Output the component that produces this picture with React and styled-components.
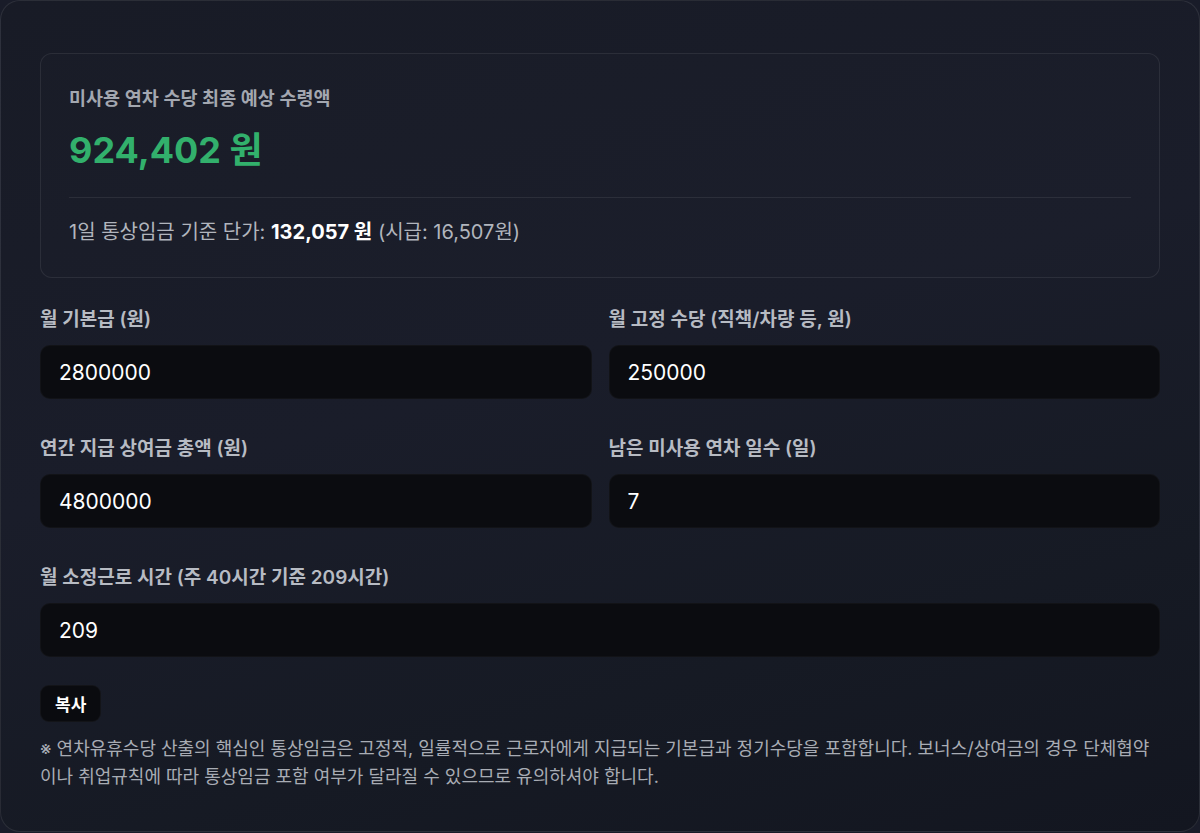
import styled, { createGlobalStyle } from "styled-components";

const GlobalStyle = createGlobalStyle`
  html, body {
    margin: 0;
    padding: 0;
    background: #191c29;
  }
  body {
    font-family: "Inter", "Noto Sans CJK KR", sans-serif;
  }
  * { box-sizing: border-box; }
`;

const Card = styled.div`
  width: 1200px;
  height: 832px;
  padding: 52px 39px 38px;
  border: 1px solid rgba(255, 255, 255, 0.09);
  border-radius: 20px;
  background: linear-gradient(165deg, #181b26 0%, #1a1d2a 45%, #161a24 75%, #131620 100%);
  display: flex;
  flex-direction: column;
`;

const ResultBox = styled.div`
  border: 1px solid rgba(255, 255, 255, 0.08);
  border-radius: 12px;
  padding: 32px 28px;
  background: rgba(255, 255, 255, 0.006);
`;

const ResultLabel = styled.div`
  font-size: 18.5px;
  line-height: 24px;
  font-weight: 600;
  color: #a3a7b0;
`;

const Amount = styled.div`
  margin-top: 18px;
  font-size: 36px;
  line-height: 44px;
  font-weight: 700;
  color: #32b06c;
`;

const Divider = styled.div`
  margin-top: 25px;
  height: 1px;
  background: rgba(255, 255, 255, 0.08);
`;

const Detail = styled.div`
  margin-top: 21px;
  font-size: 20px;
  line-height: 26px;
  color: #b1b5bd;

  strong {
    color: #ffffff;
    font-weight: 700;
  }
`;

const FieldGrid = styled.div`
  margin-top: 30px;
  display: grid;
  grid-template-columns: 1fr 1fr;
  column-gap: 17px;
  row-gap: 38px;
`;

const Field = styled.label`
  display: flex;
  flex-direction: column;
  gap: 13px;
  grid-column: ${(p) => (p.$wide ? "1 / -1" : "auto")};
`;

const FieldLabel = styled.span`
  font-size: 19px;
  line-height: 24px;
  font-weight: 600;
  color: #b7bbc3;
`;

const Input = styled.input`
  height: 54px;
  width: 100%;
  padding: 0 18px;
  border: 1px solid rgba(255, 255, 255, 0.03);
  border-radius: 10px;
  background: #0b0c10;
  color: #ffffff;
  font-family: "Inter", "Noto Sans CJK KR", sans-serif;
  font-size: 21px;
  outline: none;
`;

const CopyButton = styled.button`
  align-self: flex-start;
  margin-top: 28px;
  height: 37px;
  padding: 0 14px;
  border: 1px solid rgba(255, 255, 255, 0.04);
  border-radius: 9px;
  background: #0a0b0f;
  color: #ffffff;
  font-family: "Inter", "Noto Sans CJK KR", sans-serif;
  font-size: 17px;
  font-weight: 700;
`;

const Note = styled.p`
  margin: 13px 0 0;
  font-size: 18px;
  line-height: 28px;
  color: #a8acb4;
`;

const fields = [
  { label: "월 기본급 (원)", value: "2800000" },
  { label: "월 고정 수당 (직책/차량 등, 원)", value: "250000" },
  { label: "연간 지급 상여금 총액 (원)", value: "4800000" },
  { label: "남은 미사용 연차 일수 (일)", value: "7" },
  { label: "월 소정근로 시간 (주 40시간 기준 209시간)", value: "209", wide: true },
];

export default function App() {
  return (
    <>
      <GlobalStyle />
      <Card>
        <ResultBox>
          <ResultLabel>미사용 연차 수당 최종 예상 수령액</ResultLabel>
          <Amount>924,402 원</Amount>
          <Divider />
          <Detail>
            1일 통상임금 기준 단가: <strong>132,057 원</strong> (시급: 16,507원)
          </Detail>
        </ResultBox>
        <FieldGrid>
          {fields.map((f) => (
            <Field key={f.label} $wide={f.wide}>
              <FieldLabel>{f.label}</FieldLabel>
              <Input type="text" defaultValue={f.value} />
            </Field>
          ))}
        </FieldGrid>
        <CopyButton>복사</CopyButton>
        <Note>
          ※ 연차유휴수당 산출의 핵심인 통상임금은 고정적, 일률적으로 근로자에게 지급되는 기본급과 정기수당을 포함합니다. 보너스/상여금의 경우 단체협약이나 취업규칙에 따라 통상임금 포함 여부가 달라질 수 있으므로 유의하셔야 합니다.
        </Note>
      </Card>
    </>
  );
}
